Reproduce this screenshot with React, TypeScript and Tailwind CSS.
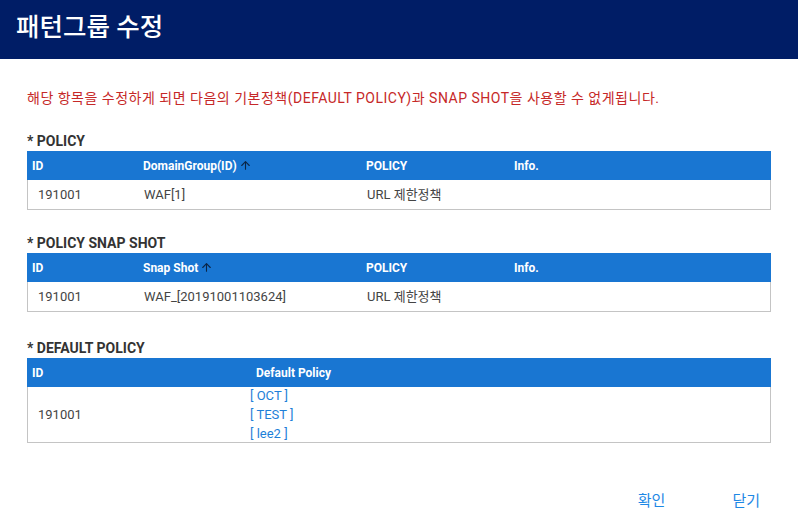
import { ArrowUp } from "lucide-react";

const font = { fontFamily: 'Roboto, "Noto Sans CJK KR", sans-serif' };

function SortArrow() {
  return <ArrowUp className="ml-[2px] h-[13px] w-[13px] text-[#0b2545]" strokeWidth={2} />;
}

function PolicyTable({ second }: { second: string }) {
  return (
    <div className="w-[744px]">
      <div className="flex h-[29px] items-center bg-[#1976d2] text-[12px] font-bold text-white">
        <div className="w-[111px] pl-[5px]">ID</div>
        <div className="flex w-[223px] items-center pl-[5px]">
          {second}
          <SortArrow />
        </div>
        <div className="w-[148px] pl-[5px]">POLICY</div>
        <div className="pl-[5px]">Info.</div>
      </div>
    </div>
  );
}

export default function App() {
  return (
    <div className="h-[523px] w-[798px] bg-white text-[#333]" style={font}>
      {/* Header */}
      <header className="flex h-[59px] items-center bg-[#001d66] pb-[4px] pl-[16px]">
        <h1 className="text-[25.5px] font-medium leading-none text-white">패턴그룹 수정</h1>
      </header>

      <div className="px-[27px]">
        <p className="mt-[30px] text-[14px] leading-[18px] tracking-[0.5px] text-[#c62828]">
          해당 항목을 수정하게 되면 다음의 기본정책(DEFAULT POLICY)과 SNAP SHOT을 사용할 수 없게됩니다.
        </p>

        {/* POLICY */}
        <h2 className="mt-[24px] text-[14px] font-bold leading-[20px] text-[#333]">* POLICY</h2>
        <PolicyTable second="DomainGroup(ID)" />
        <div className="flex h-[30px] w-[744px] items-center border-x border-b border-[#c4c4c4] text-[13px] text-[#444]">
          <div className="w-[111px] pl-[10px]">191001</div>
          <div className="w-[223px] pl-[5px]">WAF[1]</div>
          <div className="pl-[5px]">URL 제한정책</div>
        </div>

        {/* SNAP SHOT */}
        <h2 className="mt-[23px] text-[14px] font-bold leading-[20px] text-[#333]">* POLICY SNAP SHOT</h2>
        <PolicyTable second="Snap Shot" />
        <div className="flex h-[30px] w-[744px] items-center border-x border-b border-[#c4c4c4] text-[13px] text-[#444]">
          <div className="w-[111px] pl-[10px]">191001</div>
          <div className="w-[223px] pl-[5px]">WAF_[20191001103624]</div>
          <div className="pl-[5px]">URL 제한정책</div>
        </div>

        {/* DEFAULT POLICY */}
        <h2 className="mt-[26px] text-[14px] font-bold leading-[20px] text-[#333]">* DEFAULT POLICY</h2>
        <div className="flex h-[29px] w-[744px] items-center bg-[#1976d2] text-[12px] font-bold text-white">
          <div className="w-[224px] pl-[5px]">ID</div>
          <div className="pl-[5px]">Default Policy</div>
        </div>
        <div className="flex h-[56px] w-[744px] items-center border-x border-b border-[#c4c4c4] text-[13px] text-[#444]">
          <div className="w-[222px] pl-[10px]">191001</div>
          <div className="flex flex-col leading-[19px] text-[#1e7fd8]">
            <span>[ OCT ]</span>
            <span>[ TEST ]</span>
            <span>[ lee2 ]</span>
          </div>
        </div>
      </div>

      {/* Actions */}
      <div className="mt-[48px] flex justify-end gap-[67px] pr-[38px] text-[15px] leading-[20px] text-[#1e88e5]">
        <button>확인</button>
        <button>닫기</button>
      </div>
    </div>
  );
}
